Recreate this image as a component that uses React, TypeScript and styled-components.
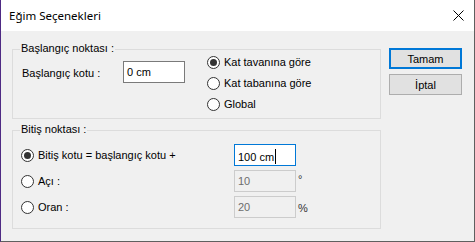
import React from "react";
import styled, { createGlobalStyle } from "styled-components";

const GlobalStyle = createGlobalStyle`
  html, body {
    margin: 0;
    padding: 0;
    background: #ffffff;
  }
  body {
    font-family: "Liberation Sans", Arial, sans-serif;
    font-size: 11px;
    color: #000000;
  }
`;

const WindowEl = styled.div`
  width: 475px;
  height: 242px;
  box-sizing: border-box;
  display: flex;
  flex-direction: column;
  border-left: 1px solid #4e2a84;
  border-right: 1px solid #5f5f5f;
  border-bottom: 1px solid #5f5f5f;
  background: #f0f0f0;
`;

const TitleBar = styled.div`
  height: 31px;
  flex: none;
  display: flex;
  align-items: center;
  justify-content: space-between;
  background: #ffffff;
  padding: 0 10px 0 8px;
`;

const Title = styled.span`
  font-family: "Noto Sans", "Open Sans", sans-serif;
  font-size: 11.5px;
  color: #000000;
  line-height: 16px;
`;

const CloseIcon = styled.svg`
  width: 11px;
  height: 11px;
  display: block;
`;

const Body = styled.div`
  flex: 1;
  display: flex;
  gap: 8px;
  padding: 17px 0 0 11px;
`;

const LeftCol = styled.div`
  width: 369px;
  display: flex;
  flex-direction: column;
  gap: 11px;
  padding-top: 1px;
`;

const GroupBox = styled.div<{ $height: number }>`
  position: relative;
  box-sizing: border-box;
  height: ${(p) => p.$height}px;
  border: 1px solid #dcdcdc;
`;

const Caption = styled.span`
  position: absolute;
  top: -8px;
  left: 7px;
  padding: 0 1px;
  line-height: 13px;
  background: #f0f0f0;
`;

const StartRow = styled.div`
  display: flex;
  align-items: flex-start;
  padding: 2px 0 0 9px;
`;

const FieldLabel = styled.span`
  width: 101px;
  line-height: 13px;
  margin-top: 15px;
`;

const TextBox = styled.div<{ $state?: "normal" | "focus" | "disabled" }>`
  box-sizing: border-box;
  width: 62px;
  height: 22px;
  padding: 4px 2px 0 3px;
  line-height: 13px;
  white-space: nowrap;
  background: ${(p) => (p.$state === "disabled" ? "#f0f0f0" : "#ffffff")};
  color: ${(p) => (p.$state === "disabled" ? "#6d6d6d" : "#000000")};
  border: 1px solid
    ${(p) =>
      p.$state === "focus"
        ? "#0078d7"
        : p.$state === "disabled"
        ? "#cccccc"
        : "#7a7a7a"};
`;

const StartBox = styled(TextBox)`
  margin-top: 9px;
`;

const Caret = styled.span`
  display: inline-block;
  width: 1px;
  height: 15px;
  background: #000000;
  vertical-align: -3px;
  margin-left: 1px;
`;

const RadioCol = styled.div`
  display: flex;
  flex-direction: column;
  gap: 1px;
  margin-left: 22px;
`;

const RadioRow = styled.label<{ $height: number }>`
  display: flex;
  align-items: center;
  gap: 4px;
  height: ${(p) => p.$height}px;
  line-height: 13px;
`;

const RadioDot = styled.span<{ $checked?: boolean }>`
  box-sizing: border-box;
  width: 13px;
  height: 13px;
  border-radius: 50%;
  border: 1px solid #333333;
  background: #ffffff;
  display: flex;
  align-items: center;
  justify-content: center;

  &::after {
    content: "";
    width: 7px;
    height: 7px;
    border-radius: 50%;
    background: ${(p) => (p.$checked ? "#333333" : "transparent")};
  }
`;

const EndGrid = styled.div`
  display: grid;
  grid-template-columns: 213px 62px auto;
  grid-auto-rows: 22px;
  row-gap: 4px;
  padding: 13px 0 0 8px;
`;

const Unit = styled.span<{ $top: number }>`
  margin-left: 2px;
  padding-top: ${(p) => p.$top}px;
  line-height: 13px;
  color: #333333;
`;

const ButtonCol = styled.div`
  display: flex;
  flex-direction: column;
  gap: 5px;
`;

const Button = styled.button<{ $default?: boolean }>`
  box-sizing: border-box;
  width: 73px;
  height: 21px;
  padding: 0;
  font-family: "Liberation Sans", Arial, sans-serif;
  font-size: 11px;
  color: #000000;
  background: #e1e1e1;
  border: ${(p) => (p.$default ? "2px solid #0078d7" : "1px solid #adadad")};
  border-radius: 0;
`;

const Radio = ({
  checked,
  height,
  children,
}: {
  checked?: boolean;
  height: number;
  children: React.ReactNode;
}) => (
  <RadioRow $height={height}>
    <RadioDot $checked={checked} />
    <span>{children}</span>
  </RadioRow>
);

export default function App() {
  return (
    <>
      <GlobalStyle />
      <WindowEl>
        <TitleBar>
          <Title>Eğim Seçenekleri</Title>
          <CloseIcon viewBox="0 0 11 11">
            <path d="M0.5 0.5 L10.5 10.5 M10.5 0.5 L0.5 10.5" stroke="#000" strokeWidth="1" />
          </CloseIcon>
        </TitleBar>
        <Body>
          <LeftCol>
            <GroupBox $height={70}>
              <Caption>Başlangıç noktası :</Caption>
              <StartRow>
                <FieldLabel>Başlangıç kotu :</FieldLabel>
                <StartBox>0 cm</StartBox>
                <RadioCol>
                  <Radio checked height={20}>Kat tavanına göre</Radio>
                  <Radio height={20}>Kat tabanına göre</Radio>
                  <Radio height={20}>Global</Radio>
                </RadioCol>
              </StartRow>
            </GroupBox>
            <GroupBox $height={99}>
              <Caption>Bitiş noktası :</Caption>
              <EndGrid>
                <Radio checked height={22}>Bitiş kotu = başlangıç kotu +</Radio>
                <TextBox $state="focus">
                  100 cm
                  <Caret />
                </TextBox>
                <span />
                <Radio height={22}>Açı :</Radio>
                <TextBox $state="disabled">10</TextBox>
                <Unit $top={3}>°</Unit>
                <Radio height={22}>Oran :</Radio>
                <TextBox $state="disabled">20</TextBox>
                <Unit $top={6}>%</Unit>
              </EndGrid>
            </GroupBox>
          </LeftCol>
          <ButtonCol>
            <Button $default>Tamam</Button>
            <Button>İptal</Button>
          </ButtonCol>
        </Body>
      </WindowEl>
    </>
  );
}
